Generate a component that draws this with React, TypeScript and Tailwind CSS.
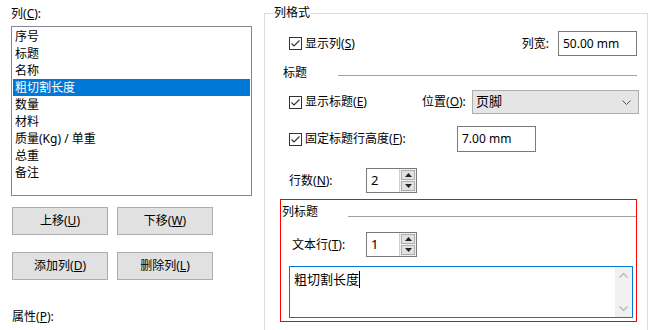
import React from 'react';

const font = { fontFamily: '"Noto Sans", "Noto Sans CJK SC", sans-serif' };

const columns = ['序号', '标题', '名称', '粗切割长度', '数量', '材料', '质量(Kg) / 单重', '总重', '备注'];

function Mn({ text, k, tail = '' }: { text: string; k: string; tail?: string }) {
  return (
    <span className="whitespace-nowrap">
      {text}(<span className="underline underline-offset-[1px]">{k}</span>){tail}
    </span>
  );
}

function Check({ children }: { children: React.ReactNode }) {
  return (
    <div className="flex items-center gap-[3px]">
      <div className="flex h-[13px] w-[13px] items-center justify-center border border-[#333333] bg-white">
        <svg width="11" height="11" viewBox="0 0 11 11">
          <path d="M1.5 5.5 L4 8 L9.5 2.5" fill="none" stroke="#333333" strokeWidth="1.2" />
        </svg>
      </div>
      {children}
    </div>
  );
}

function Spin({ value }: { value: string }) {
  return (
    <div className="flex h-[25px] w-[51px] border border-[#7a7a7a] bg-white">
      <div className="flex flex-1 items-center pl-[4px] text-[13px]">{value}</div>
      <div className="flex w-[17px] flex-col gap-px border-l border-[#cfcfcf] bg-[#f0f0f0] p-px">
        <div className="flex flex-1 items-center justify-center border border-[#adadad] bg-[#e1e1e1]">
          <svg width="7" height="4" viewBox="0 0 7 4">
            <path d="M0 4 L3.5 0 L7 4 Z" fill="#222" />
          </svg>
        </div>
        <div className="flex flex-1 items-center justify-center border border-[#adadad] bg-[#e1e1e1]">
          <svg width="7" height="4" viewBox="0 0 7 4">
            <path d="M0 0 L3.5 4 L7 0 Z" fill="#222" />
          </svg>
        </div>
      </div>
    </div>
  );
}

function Btn({ children }: { children: React.ReactNode }) {
  return (
    <div className="flex h-[28px] w-[96px] items-center justify-center border border-[#adadad] bg-[#e1e1e1]">
      {children}
    </div>
  );
}

export default function App() {
  return (
    <div className="flex h-[330px] w-[655px] overflow-hidden bg-white text-[12px] text-black" style={font}>
      {/* Left column */}
      <div className="flex w-[264px] shrink-0 flex-col pl-[11px]">
        <div className="mt-[6px] flex h-[16px] items-center">
          <Mn text="列" k="C" tail=":" />
        </div>
        <div className="mt-[4px] h-[170px] w-[241px] border border-[#828790] p-px">
          {columns.map((c, i) => (
            <div
              key={c}
              className={
                i === 3
                  ? 'flex h-[17px] items-center bg-[#0078d7] pl-[2px] text-white'
                  : 'flex h-[17px] items-center pl-[2px]'
              }
            >
              {c}
            </div>
          ))}
        </div>
        <div className="ml-px mt-[11px] flex gap-[9px]">
          <Btn>
            <Mn text="上移" k="U" />
          </Btn>
          <Btn>
            <Mn text="下移" k="W" />
          </Btn>
        </div>
        <div className="ml-px mt-[17px] flex gap-[9px]">
          <Btn>
            <Mn text="添加列" k="D" />
          </Btn>
          <Btn>
            <Mn text="删除列" k="L" />
          </Btn>
        </div>
        <div className="ml-px mt-[29px] flex h-[16px] items-center">
          <Mn text="属性" k="P" tail=":" />
        </div>
      </div>

      {/* Right column: group box */}
      <div className="relative mt-[13px] flex h-[340px] w-[384px] shrink-0 flex-col border border-b-0 border-[#dcdcdc]">
        <span className="absolute left-[8px] top-[-9px] bg-white px-px leading-[16px]">列格式</span>

        <div className="mt-[17px] flex h-[25px] items-center">
          <div className="ml-[24px]">
            <Check>
              <Mn text="显示列" k="S" />
            </Check>
          </div>
          <div className="flex-1" />
          <span className="mr-[9px]">列宽:</span>
          <div className="mr-[10px] flex h-[25px] w-[79px] items-center border border-[#7a7a7a] pl-[4px] text-[12px]">
            50.00 mm
          </div>
        </div>

        <div className="mt-[9px] flex h-[16px] items-center">
          <span className="ml-[18px] w-[55px]">标题</span>
          <div className="mr-[10px] mt-[4px] h-px flex-1 bg-[#a0a0a0]" />
        </div>

        <div className="mt-[9px] flex h-[24px] items-center">
          <div className="ml-[24px] w-[133px]">
            <Check>
              <Mn text="显示标题" k="E" />
            </Check>
          </div>
          <span className="w-[50px]">
            <Mn text="位置" k="O" tail=":" />
          </span>
          <div className="flex h-[24px] w-[167px] items-center justify-between border border-[#adadad] bg-[#e5e5e5] pl-[3px] pr-[7px] text-[13px]">
            <span>页脚</span>
            <svg width="9" height="5" viewBox="0 0 9 5">
              <path d="M0.5 0.5 L4.5 4.5 L8.5 0.5" fill="none" stroke="#555" strokeWidth="1" />
            </svg>
          </div>
        </div>

        <div className="mt-[12px] flex h-[26px] items-center">
          <div className="ml-[24px] w-[168px]">
            <Check>
              <Mn text="固定标题行高度" k="F" tail=":" />
            </Check>
          </div>
          <div className="flex h-[26px] w-[79px] items-center border border-[#7a7a7a] pl-[4px] text-[12px]">
            7.00 mm
          </div>
        </div>

        <div className="mt-[16px] flex h-[25px] items-center">
          <span className="ml-[24px] w-[77px]">
            <Mn text="行数" k="N" tail=":" />
          </span>
          <Spin value="2" />
        </div>

        <div className="ml-[15px] mt-[6px] flex h-[123px] w-[357px] flex-col border border-[#ff0000]">
          <div className="mt-[4px] flex h-[16px] items-center">
            <span className="ml-px w-[66px]">列标题</span>
            <div className="mt-[8px] h-px flex-1 bg-[#a0a0a0]" />
          </div>
          <div className="mt-[12px] flex h-[25px] items-center">
            <span className="ml-[11px] w-[74px]">
              <Mn text="文本行" k="T" tail=":" />
            </span>
            <Spin value="1" />
          </div>
          <div className="ml-[8px] mt-[9px] flex h-[52px] w-[344px] border border-[#0078d7] bg-white">
            <div className="flex flex-1 items-start pl-[4px] pt-[3px] text-[13px]">
              <span>粗切割长度</span>
              <span className="mt-[1px] h-[17px] w-px bg-black" />
            </div>
            <div className="flex w-[17px] flex-col items-center justify-between bg-[#f0f0f0] py-[6px]">
              <svg width="9" height="5" viewBox="0 0 9 5">
                <path d="M0.5 4.5 L4.5 0.5 L8.5 4.5" fill="none" stroke="#b5b5b5" strokeWidth="1.2" />
              </svg>
              <svg width="9" height="5" viewBox="0 0 9 5">
                <path d="M0.5 0.5 L4.5 4.5 L8.5 0.5" fill="none" stroke="#b5b5b5" strokeWidth="1.2" />
              </svg>
            </div>
          </div>
        </div>
      </div>
    </div>
  );
}
